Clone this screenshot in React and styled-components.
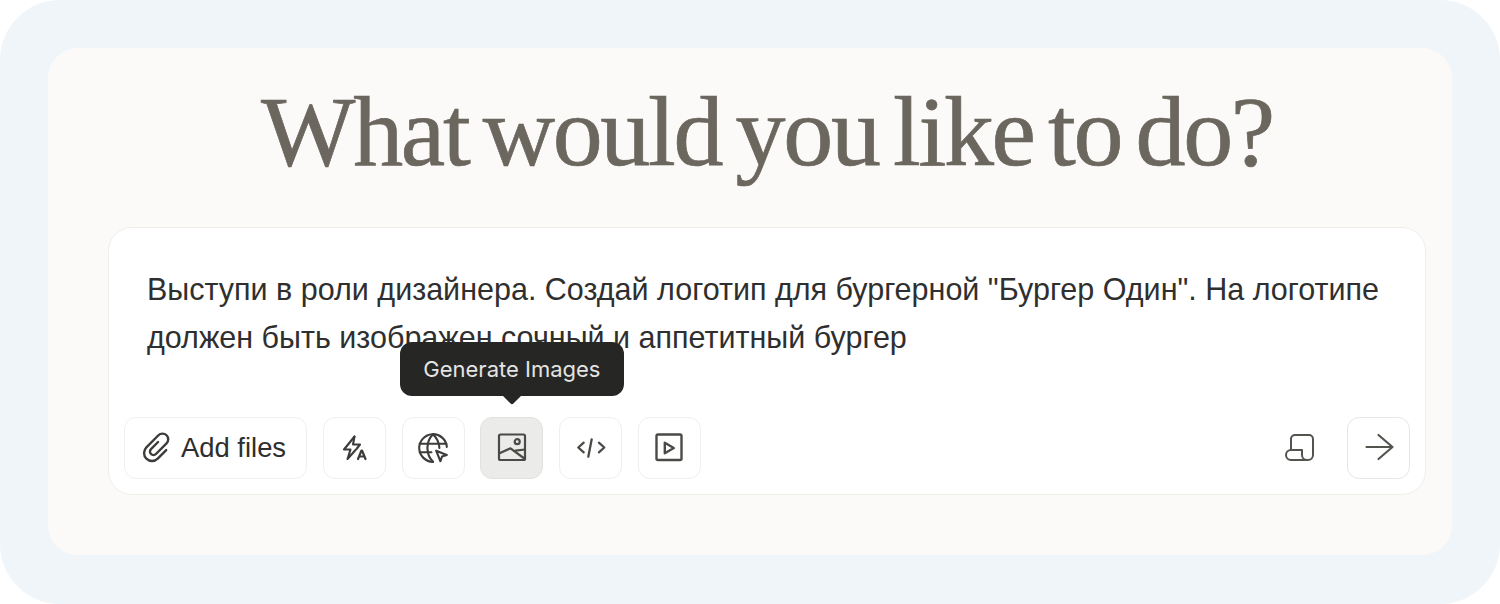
import React from "react";
import styled, { createGlobalStyle } from "styled-components";

const Global = createGlobalStyle`
  html, body { margin: 0; padding: 0; background: #fff; }
  * { box-sizing: border-box; }
`;

const Frame = styled.div`
  width: 1500px;
  height: 604px;
  padding: 48px;
  background: #f0f5fa;
  border-radius: 60px;
  overflow: hidden;
`;

const Panel = styled.main`
  height: 507px;
  padding: 0 26px 60px 60px;
  background: #fbfaf8;
  border-radius: 30px;
  display: flex;
  flex-direction: column;
`;

const Title = styled.h1`
  margin: 34px 0 0;
  height: 145px;
  font-family: "Liberation Serif", serif;
  font-weight: 400;
  font-size: 100px;
  line-height: 100px;
  letter-spacing: -2.3px;
  word-spacing: -8.4px;
  -webkit-text-stroke: 0.7px #6b665e;
  text-align: center;
  color: #6b665e;
  white-space: nowrap;
`;

const Card = styled.section`
  flex: 1;
  padding: 37px 15px 15px;
  background: #fff;
  border: 1px solid #efeee9;
  border-radius: 24px;
  display: flex;
  flex-direction: column;
  justify-content: space-between;
`;

const Prompt = styled.p`
  margin: 0 0 0 23px;
  width: 1250px;
  font-family: "Liberation Sans", sans-serif;
  font-size: 30.5px;
  line-height: 48px;
  color: #2f2f2f;
`;

const Toolbar = styled.div`
  display: flex;
  align-items: center;
  gap: 15.8px;
`;

const Button = styled.button`
  position: relative;
  height: 62px;
  width: ${(p) => (p.$wide ? "183px" : "63px")};
  padding: ${(p) => (p.$wide ? "0 0 0 16px" : "0")};
  display: flex;
  align-items: center;
  justify-content: ${(p) => (p.$wide ? "flex-start" : "center")};
  gap: 8px;
  border-radius: 12px;
  border: 1px solid ${(p) => (p.$active ? "#e2e2df" : p.$strong ? "#e8e6e0" : "#f0efeb")};
  background: ${(p) => (p.$active ? "#ebebea" : "#fff")};
  font-family: "Liberation Sans", sans-serif;
  font-size: 27.4px;
  color: #2e2e2e;
`;

const Spacer = styled.div`
  flex: 1;
`;

const PlainIcon = styled.div`
  width: 63px;
  height: 62px;
  display: flex;
  align-items: center;
  justify-content: center;
`;

const Tip = styled.div`
  position: absolute;
  left: 50%;
  bottom: 82px;
  transform: translateX(-50%);
  width: 224px;
  height: 54px;
  display: flex;
  align-items: center;
  justify-content: center;
  background: #262625;
  border-radius: 12px;
  font-family: Inter, sans-serif;
  font-size: 22px;
  color: #e4e4e2;
  white-space: nowrap;
  &::after {
    content: "";
    position: absolute;
    left: 50%;
    bottom: -6px;
    width: 14px;
    height: 14px;
    background: #262625;
    border-radius: 2px;
    transform: translateX(-50%) rotate(45deg);
  }
`;

const Icon = ({ size = 32, color = "#3c3c3a", sw = 2, children }) => (
  <svg width={size} height={size} viewBox="0 0 32 32" fill="none" stroke={color} strokeWidth={sw} strokeLinecap="round" strokeLinejoin="round">
    {children}
  </svg>
);

export default function App() {
  return (
    <>
      <Global />
      <Frame>
        <Panel>
          <Title>What would you like to do?</Title>
          <Card>
            <Prompt>
              Выступи в роли дизайнера. Создай логотип для бургерной "Бургер Один". На логотипе должен быть изображен сочный и аппетитный бургер
            </Prompt>
            <Toolbar>
              <Button $wide>
                <Icon sw={2.4}>
                  <path transform="rotate(45 16 16)" d="M12.500 11V21a3.500 3.500 0 0 0 7 0V6a5.750 5.750 0 0 0-11.500 0V23a8 8 0 0 0 16 0V11" />
                </Icon>
                Add files
              </Button>
              <Button>
                <Icon sw={2.1}>
                  <path d="M16.500 4.500 6 17.500h6.500L9.500 27l8-9" />
                  <path d="M16.500 4.500 15 12.500h7l-3.500 4.500" />
                  <path d="M20 27l3.500-8.500h.5L27.500 27M21.200 24.500h5.200" strokeWidth="2.200" />
                </Icon>
              </Button>
              <Button>
                <Icon size={34} sw={2}>
                  <path d="M29 15a13 13 0 1 0-13 14" />
                  <path d="M3.500 12h25M3.500 20h11" />
                  <path d="M16 3c-7 7-7 19 0 26M16 3c4 4 6 9 6 13" />
                  <path d="M19 18.500l10 4-4.500 1.500-1.500 4.500z" />
                </Icon>
              </Button>
              <Button $active>
                <Tip>Generate Images</Tip>
                <Icon color="#4a4a47" sw={2.2}>
                  <rect x="3" y="2.500" width="26" height="25.500" rx="1.500" />
                  <circle cx="21.200" cy="9.700" r="2.500" />
                  <path d="M3.500 21.300 14.500 16.300 29 27" />
                  <path d="M19.500 18.700 29 17.500" />
                </Icon>
              </Button>
              <Button>
                <Icon color="#4a4a47" sw={2.3}>
                  <path d="M8.700 10.700 3.300 15.500l5.400 4.800M23.900 10.700l5.400 4.800-5.400 4.800M16.700 7.300l-3.400 17.400" />
                </Icon>
              </Button>
              <Button>
                <Icon color="#4a4a47" sw={2.4}>
                  <rect x="3.500" y="2.500" width="25" height="25.500" rx="1.500" />
                  <path d="M11.800 10.700v10.600l9-5.300z" />
                </Icon>
              </Button>
              <Spacer />
              <PlainIcon>
                <Icon size={32} color="#55534e" sw={2}>
                  <path d="M7 18V7a4 4 0 0 1 4-4h14a4 4 0 0 1 4 4v16a5 5 0 0 1-5 5h-1a5 5 0 0 1-5-5v-5H7a5 5 0 0 0 0 10h15" />
                </Icon>
              </PlainIcon>
              <Button $strong>
                <Icon size={32} color="#55534e" sw={2.2}>
                  <path d="M3.500 15h26M15.500 3 29.500 15 15.500 27" />
                </Icon>
              </Button>
            </Toolbar>
          </Card>
        </Panel>
      </Frame>
    </>
  );
}
